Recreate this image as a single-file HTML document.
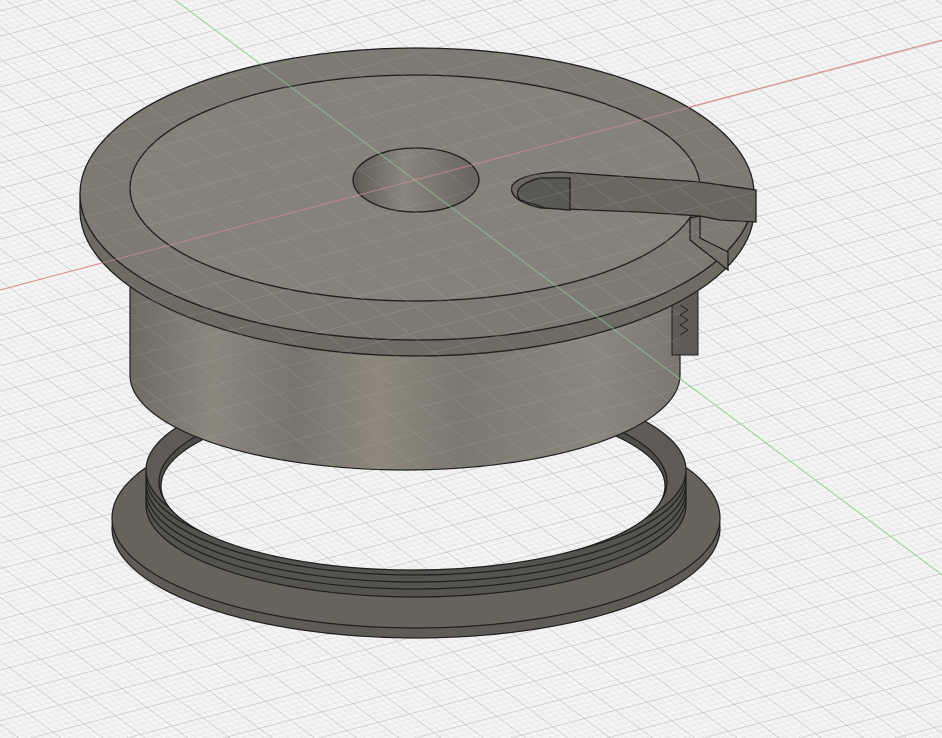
<!DOCTYPE html>
<html><head><meta charset="utf-8"><style>
html,body{margin:0;padding:0;background:#f4f4f4;width:942px;height:738px;overflow:hidden}
</style></head><body>
<svg width="942" height="738" viewBox="0 0 942 738" xmlns="http://www.w3.org/2000/svg">
<defs>
<pattern id="g" width="5" height="5" patternUnits="userSpaceOnUse" patternTransform="matrix(1.25,-0.33,1.0,0.75,415,180)">
<path d="M0 0H5M0 0V5" stroke="#dadada" stroke-width="0.7" fill="none"/>
</pattern>
<pattern id="G" width="25" height="25" patternUnits="userSpaceOnUse" patternTransform="matrix(1.25,-0.33,1.0,0.75,415,180)">
<path d="M0 0H25M0 0V25" stroke="#b8b8b8" stroke-width="0.9" fill="none"/>
</pattern>
<linearGradient id="cyl" x1="0" x2="1" y1="0" y2="0">
<stop offset="0" stop-color="#6d6a64"/><stop offset="0.15" stop-color="#8c877d"/><stop offset="0.3" stop-color="#77746d"/><stop offset="0.45" stop-color="#8e887c"/><stop offset="0.6" stop-color="#7b7870"/><stop offset="0.85" stop-color="#8b877f"/><stop offset="1" stop-color="#7a7771"/>
</linearGradient>
<linearGradient id="hole" x1="0" x2="1">
<stop offset="0" stop-color="#5e5b56"/><stop offset="0.4" stop-color="#8a867e"/><stop offset="1" stop-color="#66635e"/>
</linearGradient>
</defs>
<rect width="942" height="738" fill="#f4f4f4"/>
<rect width="942" height="738" fill="url(#g)"/>
<rect width="942" height="738" fill="url(#G)"/>
<line x1="0" y1="290" x2="942" y2="40" stroke="#e08a8a" stroke-width="1"/>
<line x1="175" y1="0" x2="942" y2="575" stroke="#8cd88c" stroke-width="1"/>

<!-- ring -->
<g stroke="#1e1e1e" stroke-width="1.2">
<ellipse cx="416" cy="528" rx="304" ry="110" fill="#5f5c57"/>
<ellipse cx="416" cy="518" rx="304" ry="110" fill="#66635d"/>
<path d="M146 505 A270 92 0 0 0 686 505 L686 470 A270 92 0 0 1 146 470 Z" fill="#55534f"/>
<path d="M146 497 A270 92 0 0 0 686 497" fill="none"/>
<path d="M146 490 A270 92 0 0 0 686 490" fill="none"/>
<path d="M146 483 A270 92 0 0 0 686 483" fill="none"/>
<path d="M146 476 A270 92 0 0 0 686 476" fill="none"/>
<ellipse cx="416" cy="470" rx="270" ry="92" fill="#5f5c57"/>
<ellipse cx="413" cy="482" rx="254" ry="88" fill="#4f4d49"/>
</g>
<ellipse cx="413" cy="486" rx="252" ry="84" fill="#f4f4f4"/>
<ellipse cx="413" cy="486" rx="252" ry="84" fill="url(#g)"/>
<ellipse cx="413" cy="486" rx="252" ry="84" fill="url(#G)"/>
<ellipse cx="413" cy="486" rx="252" ry="84" fill="none" stroke="#1e1e1e" stroke-width="1.2"/>

<!-- cylinder -->
<path d="M130 280 L130 375 A275 95 0 0 0 680 375 L680 280 Z" fill="url(#cyl)" stroke="#1e1e1e" stroke-width="1.2"/>
<!-- tab -->
<path d="M672 268 L698 262 L698 355 L672 355 Z" fill="#5f5c57" stroke="#1e1e1e" stroke-width="1"/>
<path d="M680 305 l8 5 l-8 5 l8 5 l-8 5 l8 5 l-8 5" fill="none" stroke="#1e1e1e" stroke-width="0.8"/>
<!-- flange -->
<g stroke="#1e1e1e" stroke-width="1.3">
<path d="M80 194 A337 146 0 0 0 754 194 L754 210 A337 146 0 0 1 80 210 Z" fill="#6e6b65"/>
<ellipse cx="417" cy="194" rx="337" ry="146" fill="#7d7a74"/>
<ellipse cx="415" cy="188" rx="285" ry="113" fill="#85827b"/>
<ellipse cx="416" cy="180" rx="63" ry="32" fill="url(#hole)"/>
<!-- slot -->
<path d="M756 190 L756 222 L720 220 L700 216 L640 212 L540 208 Q508 200 512 186 Q520 173 560 172 L700 182 Z" fill="#6a6761"/>
<path d="M520 200 Q510 186 540 178 L570 178 L570 210 L545 208 Z" fill="#5a5853"/>
<path d="M700 216 L700 238 L728 252 L728 270 L690 240 L690 218 Z" fill="#74716b"/>
</g>
<g clip-path="none" opacity="0.35">
<ellipse cx="417" cy="194" rx="337" ry="146" fill="url(#G)"/>
<path d="M130 280 L130 375 A275 95 0 0 0 680 375 L680 280 Z" fill="url(#G)"/>
</g>
<line x1="80" y1="269" x2="754" y2="90" stroke="#e08a8a" stroke-width="1" opacity="0.55"/>
<line x1="260" y1="64" x2="700" y2="394" stroke="#8cd88c" stroke-width="1" opacity="0.55"/>
</svg>
</body></html>
